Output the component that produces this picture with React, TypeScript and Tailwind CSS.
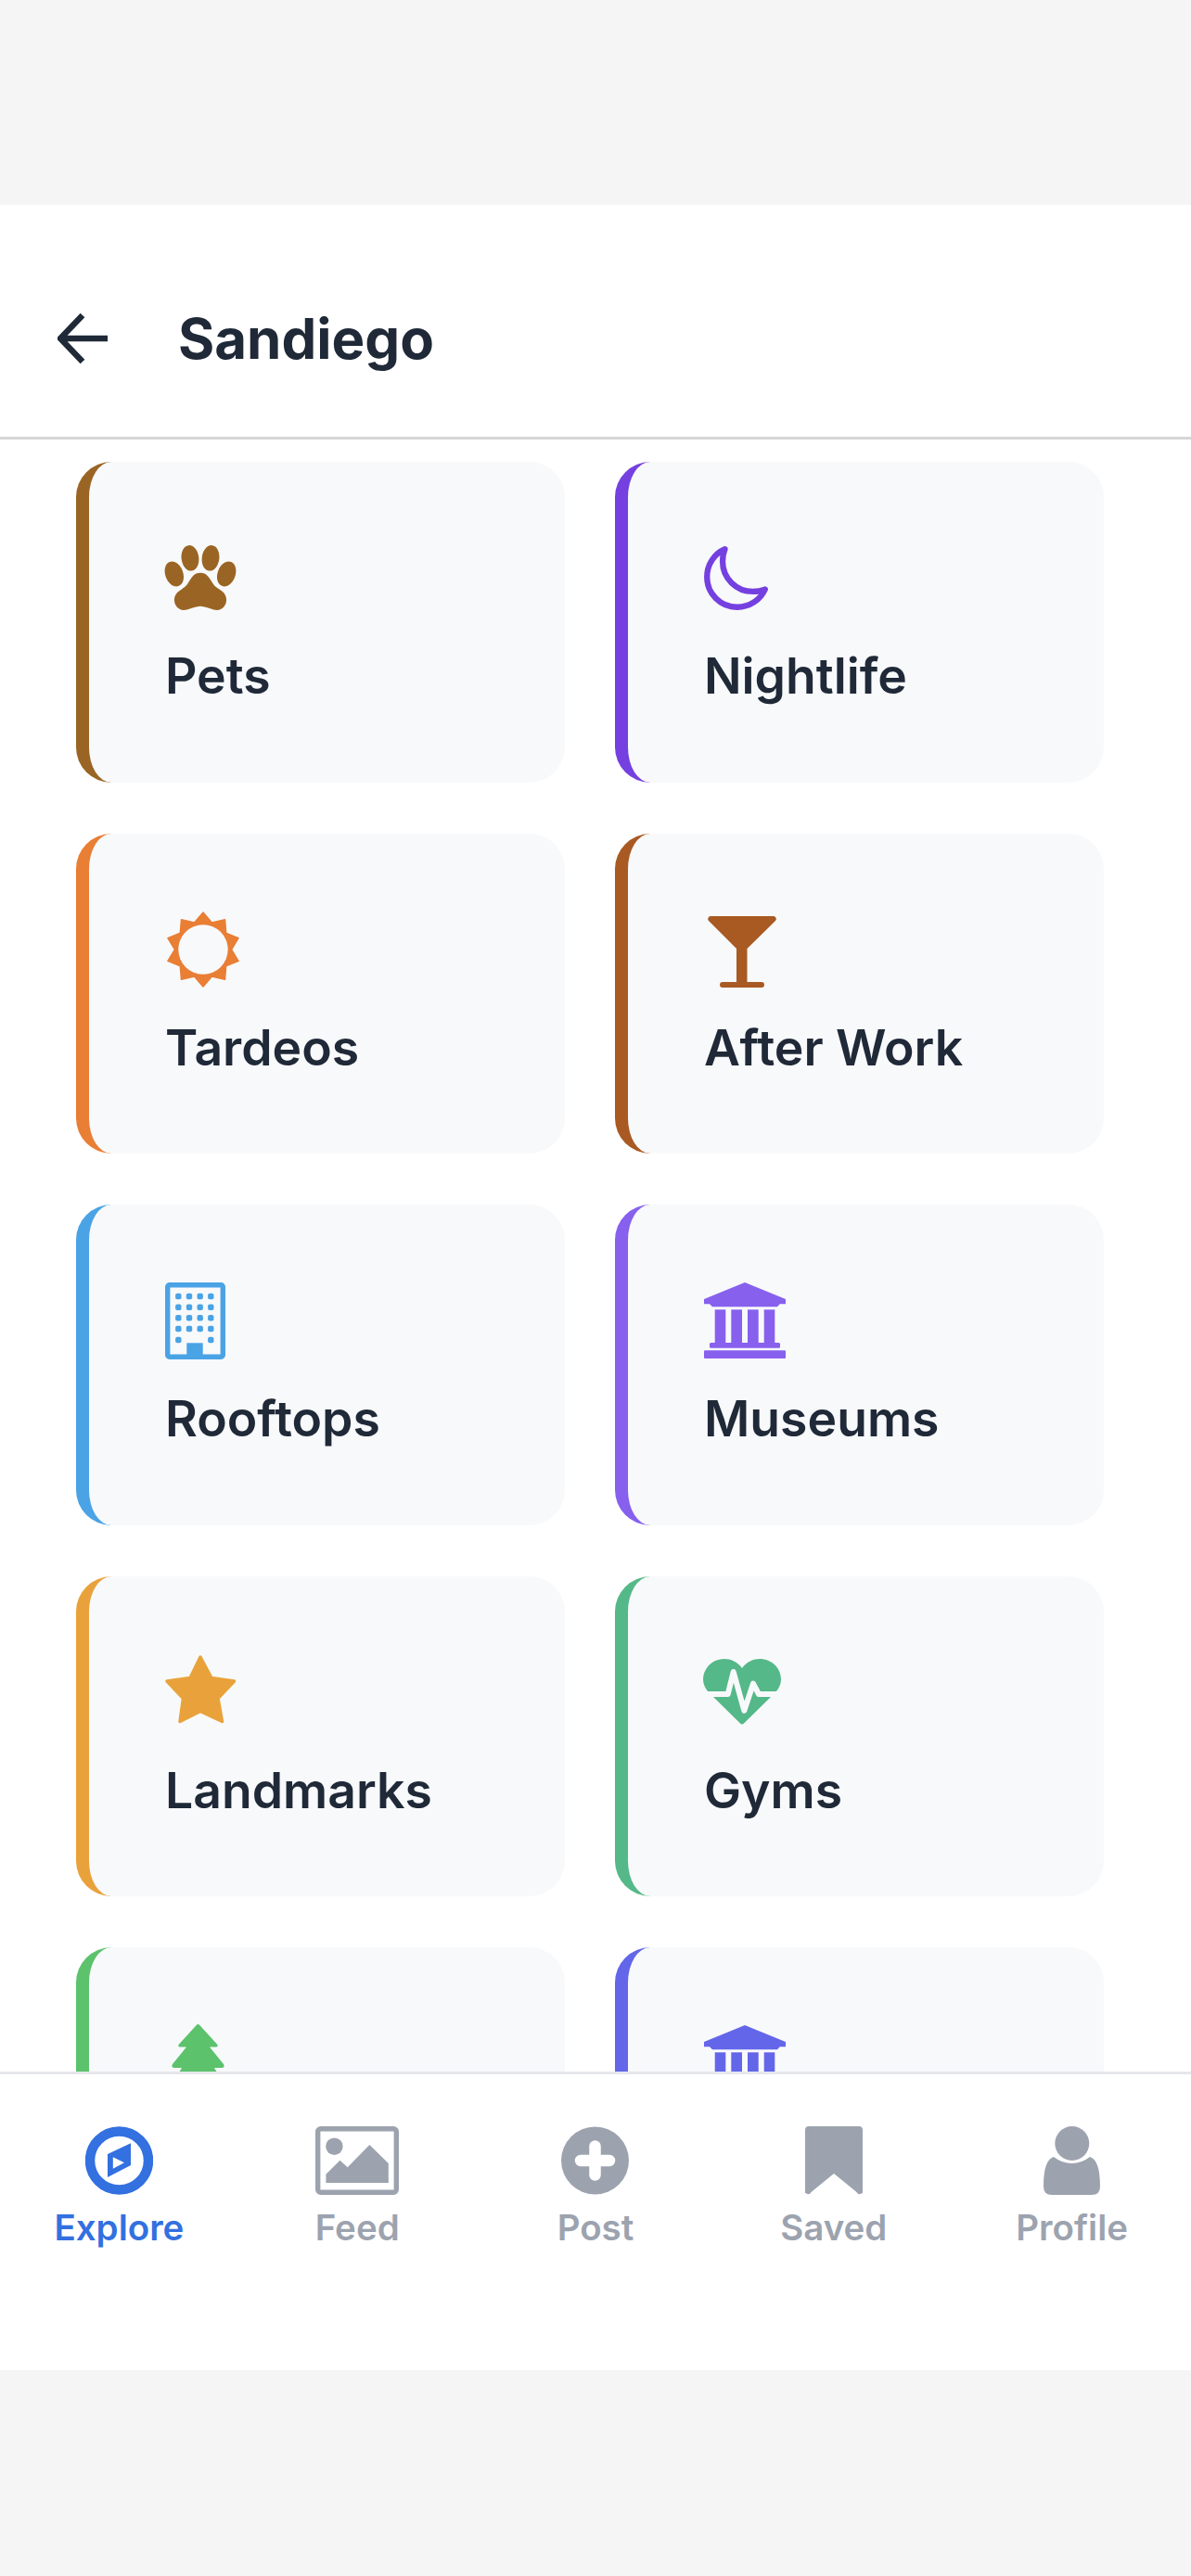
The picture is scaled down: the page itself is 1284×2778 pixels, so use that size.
import { IoPaw } from 'react-icons/io5';
import type { ReactNode } from 'react';

const sunPoints = Array.from({ length: 20 }, (_, i) => {
  const r = i % 2 === 0 ? 40 : 30.5;
  const a = (i * Math.PI) / 10;
  return `${(41 + r * Math.sin(a)).toFixed(2)},${(41 - r * Math.cos(a)).toFixed(2)}`;
}).join(' ');

function Museum({ color }: { color: string }) {
  return (
    <svg width="88" height="82" viewBox="0 0 88 82" fill={color}>
      <path d="M44 0 88 18v5.3H81.7L79 26.3H9L6 23.3H0V18z" />
      <rect x="11.7" y="29.3" width="11.6" height="36" />
      <rect x="29.3" y="29.3" width="11.7" height="36" />
      <rect x="47" y="29.3" width="11.7" height="36" />
      <rect x="64.7" y="29.3" width="11.6" height="36" />
      <rect x="6" y="65" width="76" height="5.7" rx="1.5" />
      <rect x="0" y="73.3" width="88" height="8.7" rx="1" />
    </svg>
  );
}

function Building() {
  const xs = [14.3, 26, 37.7, 49.3];
  const ys = [15, 26.7, 38.3, 50];
  return (
    <svg width="65" height="83" viewBox="0 0 65 83" fill="#4aa3e5">
      <rect x="2.7" y="2.7" width="59.6" height="77.6" rx="2" fill="none" stroke="#4aa3e5" strokeWidth="5.4" />
      {ys.map((y) => xs.map((x) => <rect key={`${x}-${y}`} x={x - 3.2} y={y - 3.2} width="6.4" height="6.4" rx="2" />))}
      <rect x="11.1" y="58.8" width="6.4" height="6.4" rx="2" />
      <rect x="46.1" y="58.8" width="6.4" height="6.4" rx="2" />
      <rect x="23.3" y="65.3" width="17.4" height="16" />
    </svg>
  );
}

function Heart() {
  return (
    <svg width="84" height="71" viewBox="0 0 84 71" className="-ml-px">
      <path
        fill="#55b888"
        d="M42 10C47 3 54 0 61 0 74 0 84 10 84 22 84 29 80 35 73 41L44 69.5Q42 71.5 40 69.5L11 41C4 35 0 29 0 22 0 10 10 0 23 0 30 0 37 3 42 10Z"
      />
      <path
        fill="none"
        stroke="#f8f9fb"
        strokeWidth="6"
        strokeLinejoin="round"
        strokeLinecap="round"
        d="M-3 38H26.7L32.7 14 44.3 55.7 54 26.7 60 38H87"
      />
    </svg>
  );
}

function Tree() {
  return (
    <svg width="57" height="84" viewBox="0 0 57 84" fill="#5cc26c" className="ml-[7px]">
      <path d="M28.5 0q1 0 2 1.2L49 21.5q2 3-1.5 3H41L56 43q2 4-2 4H46L55 62q2 4-2 4H33V84H24V66H4q-4 0-2-4L11 47H3q-4 0-2-4L16 24.5H9.5q-3.5 0-1.5-3L26.5 1.2q1-1.2 2-1.2z" />
    </svg>
  );
}

// the last row is cut off by the tab bar before its labels start
const cards: { label?: string; border: string; icon: ReactNode }[] = [
  {
    label: 'Pets',
    border: 'border-l-[#9a6524]',
    icon: <IoPaw color="#9a6524" className="-ml-[3px] h-[86px] w-[82px]" preserveAspectRatio="none" />,
  },
  {
    label: 'Nightlife',
    border: 'border-l-[#7540e0]',
    icon: (
      <svg width="77" height="77" viewBox="0 0 512 512" fill="none" className="-ml-[4px]">
        <path
          stroke="#7540e0"
          strokeWidth="42"
          strokeLinecap="round"
          strokeLinejoin="round"
          d="M160 136c0-30.62 4.51-61.61 16-88C99.57 81.27 48 159.32 48 248c0 119.29 96.71 216 216 216 88.68 0 166.73-51.57 200-128-26.39 11.49-57.38 16-88 16-119.29 0-216-96.71-216-216z"
        />
      </svg>
    ),
  },
  {
    label: 'Tardeos',
    border: 'border-l-[#e97e35]',
    icon: (
      <svg width="82" height="82" viewBox="0 0 82 82">
        <polygon points={sunPoints} fill="#e97e35" stroke="#e97e35" strokeWidth="1.5" strokeLinejoin="round" />
        <circle cx="41" cy="41" r="26.7" fill="#f8f9fb" />
      </svg>
    ),
  },
  {
    label: 'After Work',
    border: 'border-l-[#a85a22]',
    icon: (
      <svg width="74" height="77" viewBox="0 0 74 77" fill="#a85a22" className="ml-[4px] mt-[6px]">
        <path d="M3 0H71A3 3 0 0 1 73 5L42.5 35V71H58A3 3 0 0 1 58 77H16A3 3 0 0 1 16 71H31V35L1 5A3 3 0 0 1 3 0Z" />
      </svg>
    ),
  },
  {
    label: 'Rooftops',
    border: 'border-l-[#4aa3e5]',
    icon: <Building />,
  },
  {
    label: 'Museums',
    border: 'border-l-[#8760ee]',
    icon: <Museum color="#8760ee" />,
  },
  {
    label: 'Landmarks',
    border: 'border-l-[#e9a23b]',
    icon: (
      <svg width="77" height="74" viewBox="0 0 77 74" className="-mt-[6px]">
        <polygon
          points="38,2 50,24.5 74.5,28 57,46.5 61.5,71.5 38,60.5 16,71.5 19.5,46.5 2,28 27,24.5"
          fill="#e9a23b"
          stroke="#e9a23b"
          strokeWidth="3.5"
          strokeLinejoin="round"
        />
      </svg>
    ),
  },
  {
    label: 'Gyms',
    border: 'border-l-[#55b888]',
    icon: <Heart />,
  },
  {
    border: 'border-l-[#5cc26c]',
    icon: <Tree />,
  },
  {
    border: 'border-l-[#6366e9]',
    icon: <Museum color="#6366e9" />,
  },
];

const tabs: { label: string; active?: boolean; icon: ReactNode }[] = [
  {
    label: 'Explore',
    active: true,
    icon: (
      <svg width="73" height="74" viewBox="0 0 73 74">
        <circle cx="36.5" cy="37" r="31.5" fill="none" stroke="#3370e0" strokeWidth="10.5" />
        <path fill="#3370e0" fillRule="evenodd" d="M49 18.3V42L24 55V30ZM29.8 33.3V45.7L42 39.3Z" />
      </svg>
    ),
  },
  {
    label: 'Feed',
    icon: (
      <svg width="90" height="74" viewBox="0 0 90 74" fill="#9ca3af">
        <rect x="2.7" y="2.7" width="84.6" height="68.6" rx="3" fill="none" stroke="#9ca3af" strokeWidth="5.4" />
        <ellipse cx="20.4" cy="21.7" rx="9.2" ry="9.3" />
        <path d="M11.4 61V51.7L26.5 36.7 34.7 44.3 58.4 20 78.8 40V61Z" />
      </svg>
    ),
  },
  {
    label: 'Post',
    icon: (
      <svg width="73" height="74" viewBox="0 0 73 74">
        <circle cx="36.5" cy="37" r="36.5" fill="#9ca3af" />
        <path d="M36.5 21.5V52.5M21 37H52" stroke="#fff" strokeWidth="12.5" strokeLinecap="round" />
      </svg>
    ),
  },
  {
    label: 'Saved',
    icon: (
      <svg width="62" height="74" viewBox="0 0 62 74" fill="#9ca3af">
        <path d="M4 0H58A4 4 0 0 1 62 4V68A3.5 3.5 0 0 1 55.5 71L31 51 6.5 71A3.5 3.5 0 0 1 0 68V4A4 4 0 0 1 4 0Z" />
      </svg>
    ),
  },
  {
    label: 'Profile',
    icon: (
      <svg width="61" height="74" viewBox="0 0 61 74" fill="#9ca3af">
        <ellipse cx="30.8" cy="18.5" rx="18.5" ry="18.5" />
        <path d="M11 33Q20 40 30.5 40 41 40 50 33C57 35 61 45 61 65Q61 74 52 74H9Q0 74 0 65C0 45 4 35 11 33Z" />
      </svg>
    ),
  },
];

export default function App() {
  return (
    <div className="flex h-[2778px] w-[1284px] flex-col bg-[#f5f5f5] font-['Inter',sans-serif]">
      <div className="h-[221px] shrink-0" />

      <div className="flex h-[2335px] shrink-0 flex-col bg-white">
        <header className="flex h-[253px] shrink-0 items-center border-b-[3px] border-[#d6d6d6] pl-[62px] pt-[38px]">
          <svg width="54" height="54" viewBox="0 0 54 54" fill="none" stroke="#1f2937" strokeWidth="6.5">
            <path d="M54 27H5M27 2 3 27 27 52" />
          </svg>
          <h1 className="ml-[76px] text-[60px] font-bold leading-[72px] text-[#1f2937]">Sandiego</h1>
        </header>

        <main className="min-h-0 flex-1 overflow-hidden pl-[82px] pt-[24px]">
          <div className="grid w-[1108px] grid-cols-[527px_527px] gap-x-[54px] gap-y-[55px]">
            {cards.map((card) => (
              <div
                key={card.border}
                className={`h-[345.5px] rounded-[38px] border-0 border-l-[14px] bg-[#f8f9fb] pl-[82px] pt-[83px] ${card.border}`}
              >
                <div className="flex h-[84px] items-center">{card.icon}</div>
                {card.label && (
                  <p className="mt-[32px] text-[53.5px] font-semibold leading-[63px] text-[#1f2937]">{card.label}</p>
                )}
              </div>
            ))}
          </div>
        </main>

        <nav className="flex h-[322px] shrink-0 border-t-[3px] border-[#e5e7eb] bg-white pt-[56px]">
          {tabs.map((tab) => (
            <div key={tab.label} className="flex flex-1 flex-col items-center">
              <div className="flex h-[74px] items-center">{tab.icon}</div>
              <span
                className={`mt-[13px] text-[38.5px] font-semibold leading-[44px] ${
                  tab.active ? 'text-[#3370e0]' : 'text-[#9ca3af]'
                }`}
              >
                {tab.label}
              </span>
            </div>
          ))}
        </nav>
      </div>
    </div>
  );
}
